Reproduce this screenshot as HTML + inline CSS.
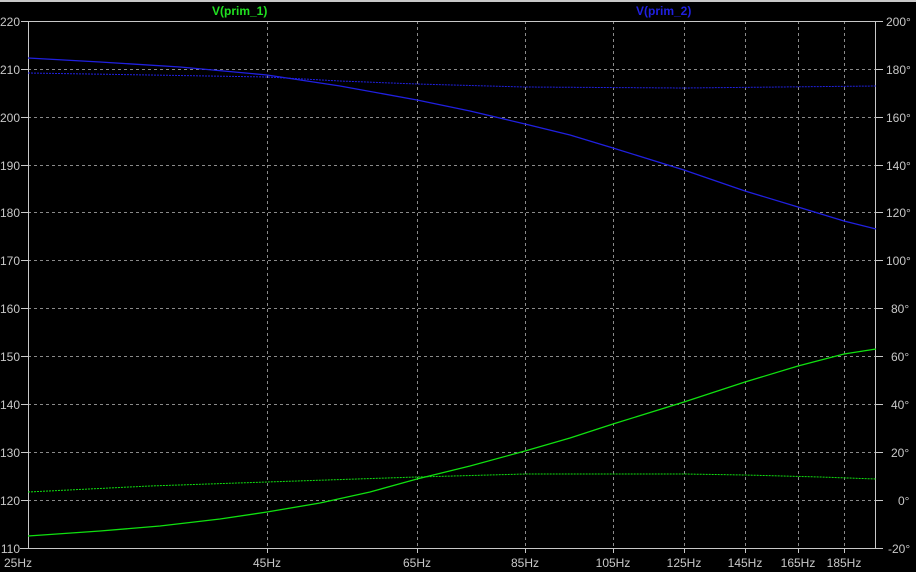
<!DOCTYPE html>
<html><head><style>
html,body{margin:0;padding:0;background:#000;width:916px;height:572px;overflow:hidden}
svg{display:block}
text{font-family:"Liberation Sans",sans-serif;font-size:12px;fill:#c8c8c8}
</style></head><body>
<svg width="916" height="572" viewBox="0 0 916 572">
<rect width="916" height="572" fill="#000"/>
<rect x="0" y="0" width="916" height="2" fill="#c8c8c8"/>
<g stroke="#8a8a8a" stroke-dasharray="3,3" stroke-width="1">
<line x1="28" x2="876" y1="69.5" y2="69.5"/><line x1="28" x2="876" y1="117.5" y2="117.5"/>
<line x1="28" x2="876" y1="165.5" y2="165.5"/><line x1="28" x2="876" y1="212.5" y2="212.5"/>
<line x1="28" x2="876" y1="260.5" y2="260.5"/><line x1="28" x2="876" y1="308.5" y2="308.5"/>
<line x1="28" x2="876" y1="356.5" y2="356.5"/><line x1="28" x2="876" y1="404.5" y2="404.5"/>
<line x1="28" x2="876" y1="452.5" y2="452.5"/><line x1="28" x2="876" y1="500.5" y2="500.5"/>
<line y1="21" y2="548" x1="267.5" x2="267.5"/><line y1="21" y2="548" x1="417.5" x2="417.5"/>
<line y1="21" y2="548" x1="525.5" x2="525.5"/><line y1="21" y2="548" x1="613.5" x2="613.5"/>
<line y1="21" y2="548" x1="684.5" x2="684.5"/><line y1="21" y2="548" x1="745.5" x2="745.5"/>
<line y1="21" y2="548" x1="798.5" x2="798.5"/><line y1="21" y2="548" x1="844.5" x2="844.5"/>
</g>
<g stroke="#c8c8c8" stroke-width="1" fill="none">
<polyline points="28.5,548 28.5,21.5 875.5,21.5 875.5,548"/>
<line x1="20" x2="876" y1="548.5" y2="548.5"/>
<path d="M21 69.5h7M21 117.5h7M21 165.5h7M21 212.5h7M21 260.5h7M21 308.5h7M21 356.5h7M21 404.5h7M21 452.5h7M21 500.5h7M21 21.5h7"/>
<path d="M876 69.5h7M876 117.5h7M876 165.5h7M876 212.5h7M876 260.5h7M876 308.5h7M876 356.5h7M876 404.5h7M876 452.5h7M876 500.5h7M876 21.5h7M876 548.5h7"/>
<path d="M267.5 548v5M417.5 548v5M525.5 548v5M613.5 548v5M684.5 548v5M745.5 548v5M798.5 548v5M844.5 548v5"/>
</g>
<g fill="none" stroke-width="1.3">
<polyline stroke="#2020e0" points="28,58 100,62 180,67 267,75 340,86 417,100 470,111 525,124 570,135 613,148 684,170 745,191 798,207 844,221 876,229"/>
<polyline stroke="#2020e0" stroke-dasharray="2,1" stroke-width="1" points="28,73 150,75 267,77 340,81 417,84 525,87 684,88 876,86"/>
<polyline stroke="#10e010" points="28,536 100,531 160,526 220,519 267,512 320,503 370,492 417,479 470,466 525,451 570,438 613,424 684,402 745,382 798,366 844,354 876,349"/>
<polyline stroke="#10e010" stroke-dasharray="2,1" stroke-width="1" points="28,492 150,486 267,482 417,477 525,474 684,474 745,475 820,477 876,479"/>
</g>
<text x="212" y="15" style="fill:#20e020;font-weight:bold">V(prim_1)</text>
<text x="636" y="15" style="fill:#2020e0;font-weight:bold">V(prim_2)</text>
<g text-anchor="end">
<text x="20" y="26">220</text><text x="20" y="74">210</text><text x="20" y="122">200</text>
<text x="20" y="170">190</text><text x="20" y="217">180</text><text x="20" y="265">170</text>
<text x="20" y="313">160</text><text x="20" y="361">150</text><text x="20" y="409">140</text>
<text x="20" y="457">130</text><text x="20" y="505">120</text><text x="20" y="553">110</text>
</g>
<g>
<text x="886" y="26">200°</text><text x="886" y="74">180°</text><text x="886" y="122">160°</text>
<text x="886" y="170">140°</text><text x="886" y="217">120°</text><text x="886" y="265">100°</text>
<text x="891" y="313">80°</text><text x="891" y="361">60°</text><text x="891" y="409">40°</text>
<text x="891" y="457">20°</text><text x="898" y="505">0°</text><text x="888" y="553">-20°</text>
</g>
<g text-anchor="middle">
<text x="18" y="567">25Hz</text><text x="267" y="567">45Hz</text><text x="417" y="567">65Hz</text>
<text x="525" y="567">85Hz</text><text x="613" y="567">105Hz</text><text x="684" y="567">125Hz</text>
<text x="745" y="567">145Hz</text><text x="798" y="567">165Hz</text><text x="844" y="567">185Hz</text>
</g>
</svg>
</body></html>
